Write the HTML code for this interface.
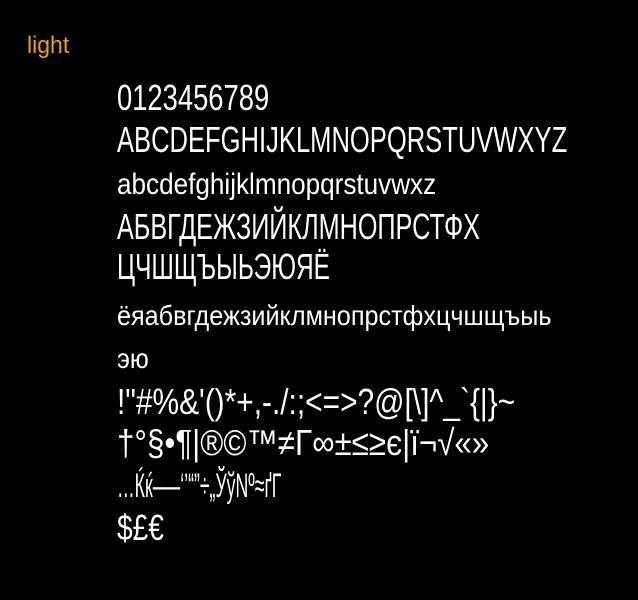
<!DOCTYPE html>
<html><head><meta charset="utf-8"><style>
html,body{margin:0;background:#000;width:638px;height:600px;overflow:hidden}
div{position:absolute;left:117px;color:#fff;font-family:"Liberation Sans","DejaVu Sans",sans-serif;font-size:36px;line-height:1;white-space:nowrap;transform-origin:0 0;font-weight:normal;}
.t{left:27px;top:34px;color:#f0a000;font-size:24px;transform:scaleX(0.96)}
</style></head><body>
<div class="t">light</div>
<div style="top:80px;transform:scaleX(0.76)">0123456789</div>
<div style="top:122px;transform:scaleX(0.71)">ABCDEFGHIJKLMNOPQRSTUVWXYZ</div>
<div style="top:170px;font-size:30px;transform:scaleX(0.87)">abcdefghijklmnopqrstuvwxz</div>
<div style="top:209px;transform:scaleX(0.70)">АБВГДЕЖЗИЙКЛМНОПРСТФХ</div>
<div style="top:249px;transform:scaleX(0.68)">ЦЧШЩЪЫЬЭЮЯЁ</div>
<div style="top:302px;font-size:28px;transform:scaleX(0.90)">ёяабвгдежзийклмнопрстфхцчшщъыь</div>
<div style="top:345px;font-size:28px;transform:scaleX(0.9)">эю</div>
<div style="top:384px;transform:scaleX(0.83)">!"#%&amp;'()*+,-./:;&lt;=&gt;?@[\]^_`{|}~</div>
<div style="top:425px;transform:scaleX(0.87)">†°§•¶|®©™≠Γ∞±≤≥є|ï¬√«»</div>
<div style="top:469px;font-size:34px;transform:scaleX(0.52)">…Ќќ–—‘’“”÷„ЎўΝº≈ґΓ</div>
<div style="top:510px;transform:scaleX(0.78)">$£€</div>
</body></html>
